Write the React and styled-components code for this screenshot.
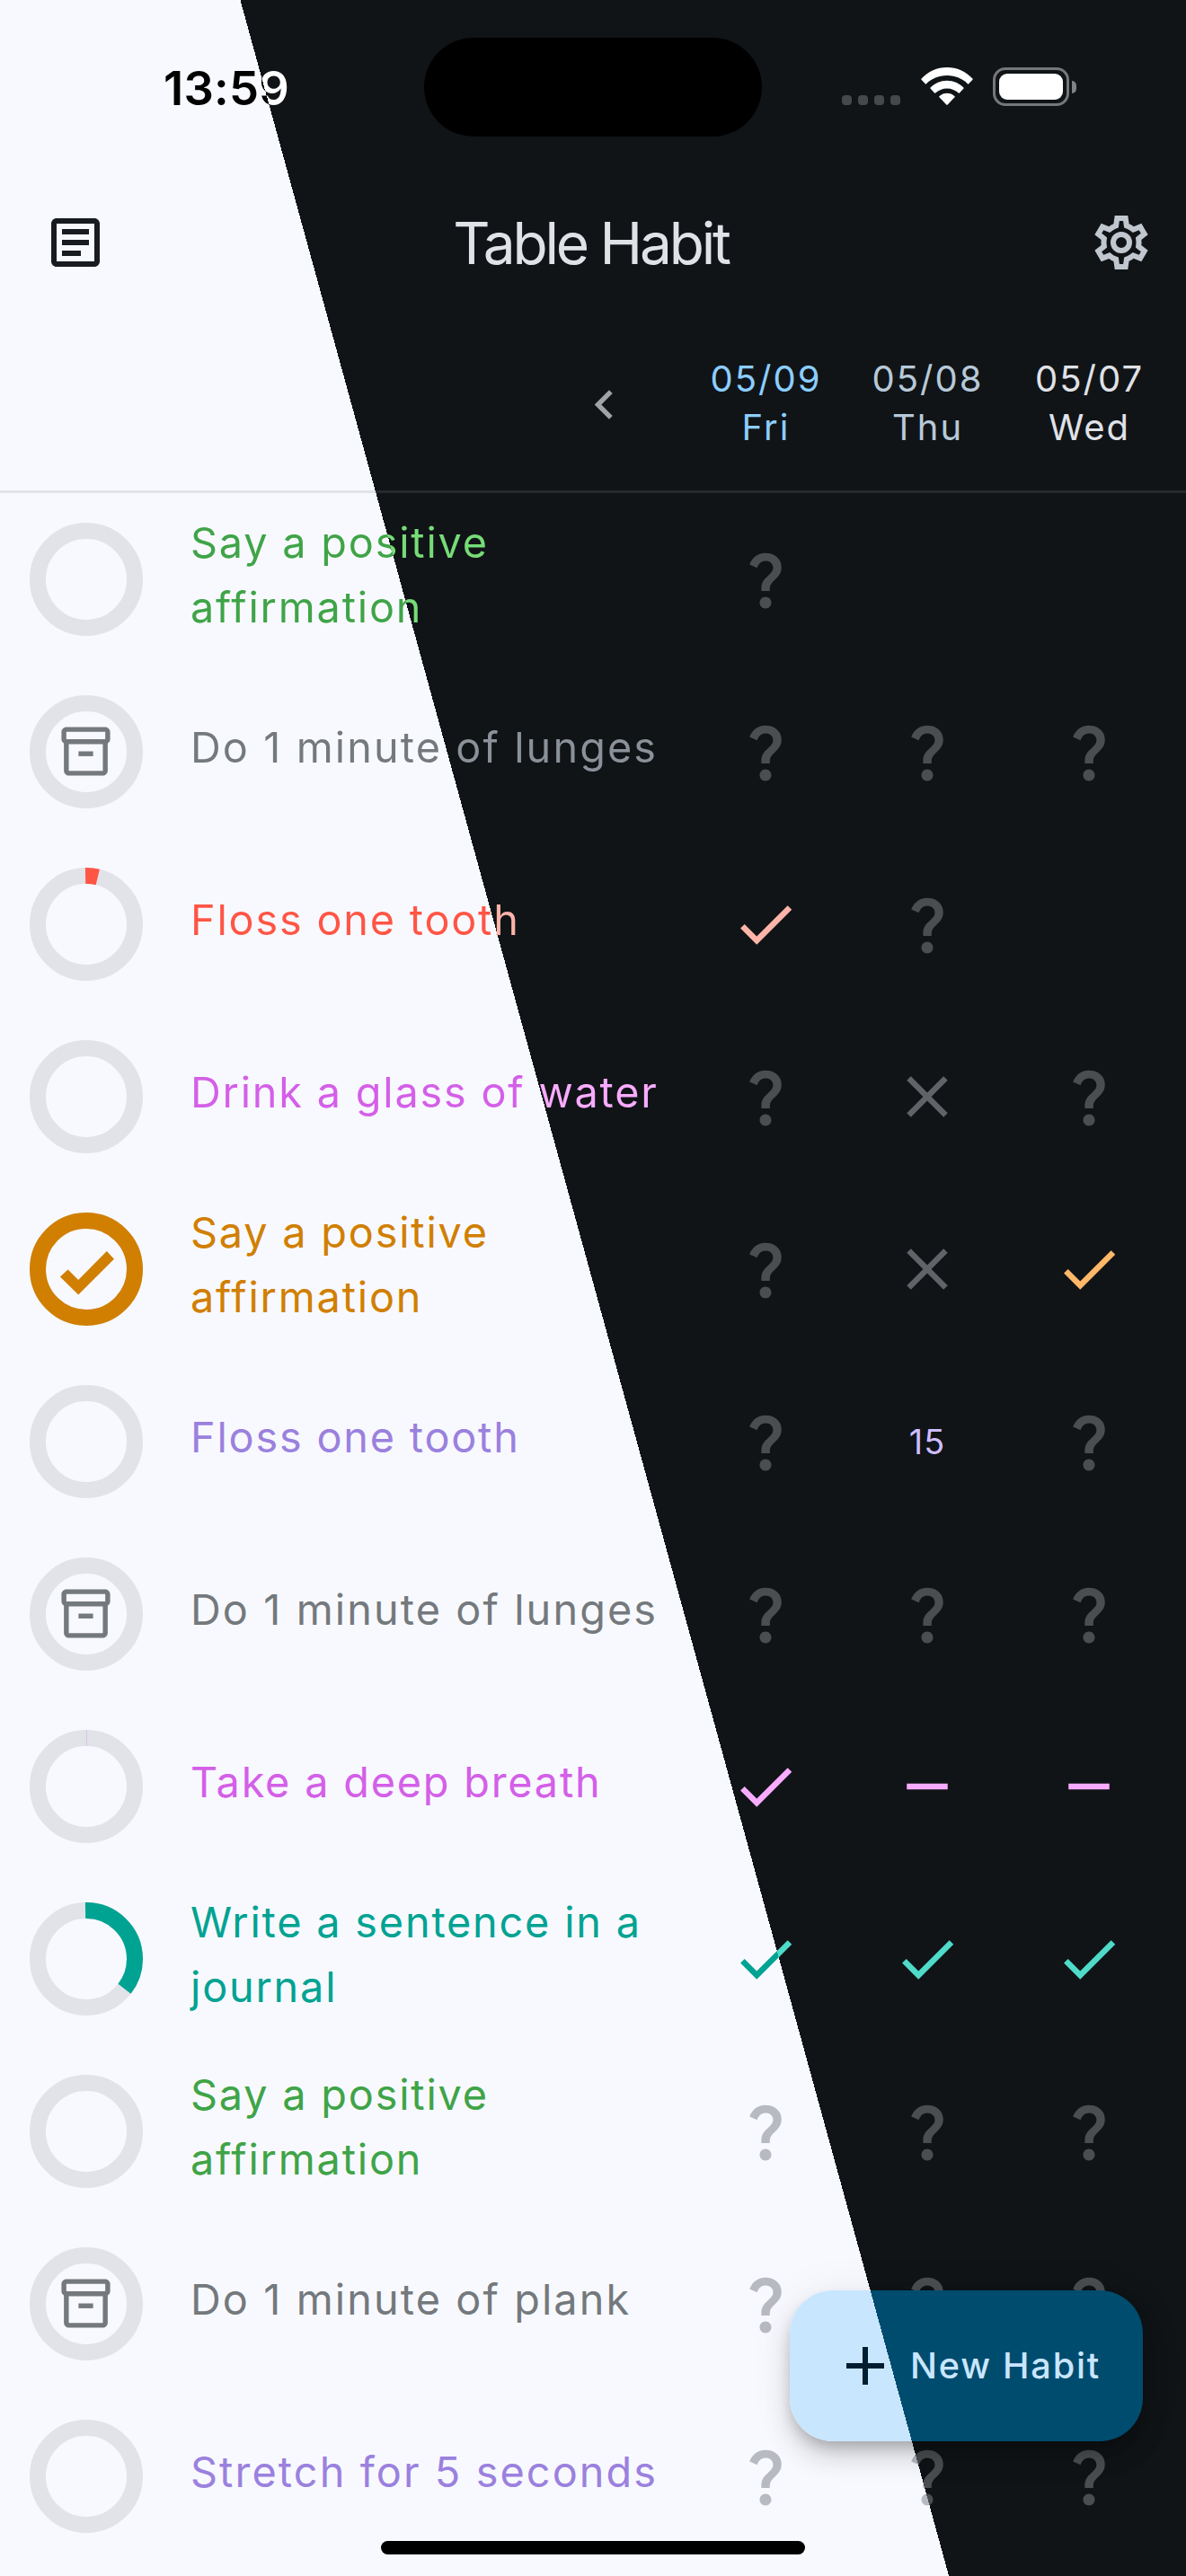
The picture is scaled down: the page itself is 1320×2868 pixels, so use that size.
import React, { useId } from "react";
import styled, { createGlobalStyle } from "styled-components";
import {
  MdOutlineArticle,
  MdOutlineInventory2,
  MdChevronLeft,
  MdAdd,
} from "react-icons/md";

/* The screen is divided by a slanted line: light theme left, dark theme right. */
const EDGE_TOP = 267.4;
const EDGE_SLOPE = 0.275;
const split = (light, dark) =>
  `linear-gradient(74.624deg, ${light} 1018.3px, ${dark} 1018.3px) fixed`;

const COLORS = {
  green: ["#3fa447", "#77dc77"],
  grey: ["#74797d", "#8b9199"],
  red: ["#ff5545", "#ffb4a9"],
  pink: ["#d45fe8", "#f9abff"],
  orange: ["#d17f00", "#ffb868"],
  purple: ["#9b81de", "#cebdff"],
  teal: ["#00a392", "#4fdbc9"],
  unknown: ["#b8bac1", "#4a4e51"],
  miss: ["#9a9da3", "#606468"],
};

const GlobalStyle = createGlobalStyle`
  body { margin: 0; background: #101417; }
  * { box-sizing: border-box; }
`;

const Screen = styled.div`
  position: relative;
  width: 1320px;
  height: 2868px;
  overflow: hidden;
  display: flex;
  flex-direction: column;
  font-family: Inter, "Liberation Sans", sans-serif;
  background: ${split("#f8f9ff", "#101417")};
`;

const StatusBar = styled.header`
  flex: none;
  height: 186px;
  display: grid;
  grid-template-columns: 472px 376px 1fr;
  align-items: start;
`;
const Time = styled.div`
  justify-self: center;
  margin: 66px 0 0 32px;
  font-size: 52.5px;
  line-height: 64px;
  font-weight: 600;
  letter-spacing: 0.2px;
  color: transparent;
  background: ${split("#000", "#fff")};
  -webkit-background-clip: text;
  background-clip: text;
`;
const Island = styled.div`
  height: 110px;
  margin-top: 42px;
  border-radius: 55px;
  background: #000;
`;
const Indicators = styled.div`
  display: flex;
  align-items: flex-end;
  height: 43px;
  margin: 75px 0 0 89px;
`;
const Dots = styled.div`
  display: flex;
  gap: 7px;
  padding-bottom: 1px;
  margin-right: 23px;
`;
const Dot = styled.span`
  width: 11px;
  height: 11px;
  border-radius: 4px;
  background: #46494b;
`;
const Wifi = styled.svg`
  width: 58px;
  height: 42px;
  margin: 0 22px 1px 0;
  fill: #fff;
`;
const Battery = styled.div`
  display: flex;
  align-items: center;
  gap: 3px;
`;
const BatteryCase = styled.div`
  width: 85px;
  height: 43px;
  padding: 4px;
  border: 3px solid #757779;
  border-radius: 14px;
`;
const BatteryFill = styled.div`
  height: 100%;
  border-radius: 9px;
  background: #fff;
`;
const BatteryTip = styled.div`
  width: 5px;
  height: 14px;
  border-radius: 0 5px 5px 0;
  background: #7f8183;
`;

const AppBar = styled.div`
  flex: none;
  height: 168px;
  padding: 0 36px 0 48px;
  display: grid;
  grid-template-columns: 72px 1fr 72px;
  align-items: center;
`;
const Title = styled.h1`
  margin: 0;
  padding: 2px 17px 0 0;
  text-align: center;
  font-size: 64px;
  line-height: 80px;
  font-weight: 400;
  letter-spacing: -3.2px;
  color: #e0e2e8;
`;
const SettingsIcon = styled.svg`
  width: 72px;
  height: 72px;
  fill: #c1c7cf;
`;

const DateBar = styled.div`
  flex: none;
  height: 192px;
  padding-right: 18px;
  display: grid;
  grid-template-columns: repeat(4, 180px);
  justify-content: end;
  align-items: center;
  justify-items: center;
`;
const Divider = styled.div`
  flex: none;
  height: 3px;
  background: ${split("#e1e3e8", "#25292c")};
`;
const DateCell = styled.div`
  display: flex;
  flex-direction: column;
  align-items: center;
  color: ${(p) => p.$color};
  font-size: 40px;
  line-height: 54px;
  letter-spacing: 2px;
  padding: 0 0 2px 1px;
`;

const Row = styled.div`
  flex: none;
  height: 192px;
  padding-right: 18px;
  display: grid;
  grid-template-columns: 192px 570px repeat(3, 180px);
  align-items: center;
`;
const RingBox = styled.div`
  display: grid;
  place-items: center;
  & > * {
    grid-area: 1 / 1;
  }
`;
const RingSvg = styled.svg`
  width: 126px;
  height: 126px;
  fill: none;
`;
const ArchiveIcon = styled(MdOutlineInventory2)`
  width: 65px;
  height: 65px;
  margin: 0 1px 1px 0;
  color: #74797d;
`;
const Name = styled.div`
  padding: 0 0 10px 20px;
  font-size: 46.8px;
  line-height: 72px;
  letter-spacing: ${(p) => p.$tracking || 1.8}px;
  color: ${(p) => (p.$split ? "transparent" : p.$tone[0])};
  ${(p) =>
    p.$split
      ? `background: ${split(p.$tone[0], p.$tone[1])};
         -webkit-background-clip: text;
         background-clip: text;`
      : ""}
`;
const Cell = styled.div`
  display: grid;
  place-items: center;
`;
const Count = styled.span`
  font-size: 37.8px;
  line-height: 48px;
  letter-spacing: 1px;
  color: ${(p) => p.$color};
`;
const MarkSvg = styled.svg`
  width: 78px;
  height: 78px;
  margin-bottom: 1px;
  display: block;
`;

const Fab = styled.button`
  position: absolute;
  left: 879px;
  top: 2550px;
  width: 393px;
  height: 168px;
  padding: 0 48px;
  border: 0;
  border-radius: 48px;
  display: flex;
  align-items: center;
  gap: 14px;
  font: 450 39.6px / 54px Inter, "Liberation Sans", sans-serif;
  letter-spacing: 1.8px;
  color: #c9e6ff;
  white-space: nowrap;
  background: ${split("#c9e6ff", "#004c6f")};
  box-shadow: 0 9px 15px -3px rgba(0, 0, 0, 0.2),
    0 18px 30px rgba(0, 0, 0, 0.14), 0 3px 54px rgba(0, 0, 0, 0.06);
  & svg {
    flex: none;
    color: #001e2f;
  }
`;
const HomeIndicator = styled.div`
  position: absolute;
  left: 424px;
  bottom: 24px;
  width: 472px;
  height: 15px;
  border-radius: 8px;
  background: #000;
`;

const MARKS = {
  "?": {
    tone: "unknown",
    d: "M11.07 12.85c.77-1.39 2.25-2.21 3.11-3.44.91-1.29.4-3.7-2.18-3.7-1.69 0-2.52 1.28-2.87 2.34L6.54 6.96C7.25 4.83 9.18 3 11.99 3c2.35 0 3.96 1.07 4.78 2.41.7 1.15 1.11 3.3.03 4.9-1.2 1.77-2.35 2.31-2.97 3.45-.25.46-.35.76-.35 2.24h-2.89c-.01-.78-.13-2.05.48-3.15zM14 20c0 1.1-.9 2-2 2s-2-.9-2-2 .9-2 2-2 2 .9 2 2z",
  },
  x: {
    tone: "miss",
    d: "M19 6.41L17.59 5 12 10.59 6.41 5 5 6.41 10.59 12 5 17.59 6.41 19 12 13.41 17.59 19 19 17.59 13.41 12z",
  },
  v: { d: "M9 16.17L4.83 12l-1.42 1.41L9 19 21 7l-1.41-1.41z" },
  "-": { d: "M19 13H5v-2h14z" },
};

/* A day's mark, filled by a hard-stop gradient that follows the theme edge. */
function Mark({ kind, tone, cx, cy }) {
  const id = useId();
  const mark = MARKS[kind];
  const [light, dark] = COLORS[mark.tone || tone];
  const unit = 24 / 78;
  const px = 12 + (EDGE_TOP + EDGE_SLOPE * cy - cx) * unit;
  return (
    <MarkSvg viewBox="0 0 24 24">
      <linearGradient
        id={id}
        gradientUnits="userSpaceOnUse"
        x1={px - 1}
        y1={12 + EDGE_SLOPE}
        x2={px + 1}
        y2={12 - EDGE_SLOPE}
      >
        <stop offset="0.5" stopColor={light} />
        <stop offset="0.5" stopColor={dark} />
      </linearGradient>
      <path d={mark.d} fill={`url(#${id})`} />
    </MarkSvg>
  );
}

function Ring({ progress = 0, color, archived, done }) {
  const len = 2 * Math.PI * 54;
  return (
    <RingBox>
      <RingSvg viewBox="-63 -63 126 126">
        <circle r="54" stroke="#e1e3e8" strokeWidth="18" />
        {progress > 0 && (
          <circle
            r="54"
            stroke={color}
            strokeWidth="18"
            strokeDasharray={progress >= 1 ? undefined : `${len * progress} ${len}`}
            transform="rotate(-91)"
          />
        )}
        {progress < 0 && (
          <rect x="0" y="-63" width="1" height="18" fill={color} opacity="0.25" />
        )}
        {done && (
          <path
            fill={color}
            d="M-20.4 .6L-29.1 8.4L-8.8 28.4L31 -11.2L22.8 -20.1L-8.8 12z"
          />
        )}
      </RingSvg>
      {archived && <ArchiveIcon />}
    </RingBox>
  );
}

const HABITS = [
  { name: "Say a positive affirmation", tone: "green", split: true, days: ["?", "", ""] },
  { name: "Do 1 minute of lunges", tone: "grey", tracking: 2.1, split: true, archived: true, days: ["?", "?", "?"] },
  { name: "Floss one tooth", tone: "red", split: true, progress: 0.041, days: ["v", "?", ""] },
  { name: "Drink a glass of water", tone: "pink", split: true, days: ["?", "x", "?"] },
  { name: "Say a positive affirmation", tone: "orange", progress: 1, done: true, days: ["?", "x", "v"] },
  { name: "Floss one tooth", tone: "purple", days: ["?", "15", "?"] },
  { name: "Do 1 minute of lunges", tone: "grey", tracking: 2.1, archived: true, days: ["?", "?", "?"] },
  { name: "Take a deep breath", tone: "pink", progress: -1, days: ["v", "-", "-"] },
  { name: "Write a sentence in a journal", tone: "teal", progress: 0.358, days: ["v", "v", "v"] },
  { name: "Say a positive affirmation", tone: "green", days: ["?", "?", "?"] },
  { name: "Do 1 minute of plank", tone: "grey", tracking: 2.1, archived: true, days: ["?", "?", "?"] },
  { name: "Stretch for 5 seconds", tone: "purple", tracking: 2.1, days: ["?", "?", "?"] },
];

const DATES = [
  ["05/09", "Fri", "#8cceff"],
  ["05/08", "Thu", "#b7c9d9"],
  ["05/07", "Wed", "#e0e2e8"],
];

export default function App() {
  return (
    <Screen>
      <GlobalStyle />
      <StatusBar>
        <Time>13:59</Time>
        <Island />
        <Indicators>
          <Dots>
            <Dot />
            <Dot />
            <Dot />
            <Dot />
          </Dots>
          <Wifi viewBox="0 0 58 42">
            <path d="M29 9C38.3 9 46.4 12.6 52.2 18.4Q52.7 18.9 53.2 18.3L57.5 13.7Q58 13 57.4 12.5C50 4.6 40 0 29 0S8 4.6.6 12.5Q0 13 .5 13.7L4.8 18.3Q5.3 18.9 5.8 18.4C11.6 12.6 19.7 9 29 9z" />
            <path d="M29 23.4C34 23.4 38.5 25.4 41.8 28.6Q42.4 29.1 42.9 28.5L47.5 23.6Q48 23 47.4 22.4C42.6 17.7 36.1 14.8 29 14.8S15.4 17.7 10.6 22.4Q10 23 10.5 23.6L15.1 28.5Q15.6 29.1 16.2 28.6C19.5 25.4 24 23.4 29 23.4z" />
            <path d="M29 28.8C32.2 28.8 35.2 30 37.4 32.1Q38 32.7 37.5 33.3L29.7 41.6Q29 42.2 28.3 41.6L20.5 33.3Q20 32.7 20.6 32.1C22.8 30 25.8 28.8 29 28.8z" />
          </Wifi>
          <Battery>
            <BatteryCase>
              <BatteryFill />
            </BatteryCase>
            <BatteryTip />
          </Battery>
        </Indicators>
      </StatusBar>

      <AppBar>
        <MdOutlineArticle size={72} color="#181c20" />
        <Title>Table Habit</Title>
        <SettingsIcon viewBox="0 0 24 24" fillRule="evenodd">
          <path d="M19.43 13c.04-.33.08-.67.08-1 0-.34-.03-.66-.07-.98l2.45-1.91-2.43-4.22-2.87 1.16c-.52-.4-1.09-.74-1.7-.99L14.44 2H9.57l-.44 3.07c-.61.26-1.18.6-1.7 1L4.56 4.9 2.12 9.12l2.44 1.9c-.04.33-.07.65-.07.98 0 .34.03.68.07 1l-2.43 1.92 2.43 4.2 2.87-1.15c.53.41 1.1.75 1.71 1L9.58 22h4.85l.44-3.06c.61-.26 1.18-.6 1.7-1.01l2.88 1.19 2.43-4.2zM17.45 11.270c.04.31.05.52.05.73 0 .21-.02.43-.05.73l-.14 1.13.89.7 1.08.84-.7 1.21-1.27-.51-1.04-.42-.9.68c-.43.32-.84.56-1.25.73l-1.06.43-.16 1.13-.2 1.35h-1.4l-.19-1.35-.16-1.13-1.06-.43c-.43-.18-.83-.41-1.23-.71l-.91-.7-1.06.43-1.27.51-.7-1.21 1.08-.84.89-.7-.14-1.13c-.03-.31-.05-.54-.05-.74s.02-.43.05-.73l.14-1.13-.89-.7-1.08-.84.7-1.21 1.27.51 1.04.42.9-.68c.43-.32.84-.56 1.25-.73l1.06-.43.16-1.13.2-1.35h1.39l.19 1.35.16 1.13 1.06.43c.43.18.83.41 1.23.71l.91.7 1.06-.43 1.27-.51.7 1.21-1.07.85-.89.7z" />
          <path d="M12 8a4 4 0 1 0 0 8 4 4 0 0 0 0-8zm0 2a2 2 0 1 1 0 4 2 2 0 0 1 0-4z" />
        </SettingsIcon>
      </AppBar>

      <DateBar>
        <MdChevronLeft size={65} color="#a0a2a4" />
        {DATES.map(([date, day, color]) => (
          <DateCell key={date} $color={color}>
            <span>{date}</span>
            <span>{day}</span>
          </DateCell>
        ))}
      </DateBar>
      <Divider />

      {HABITS.map((habit, row) => (
        <Row key={row}>
          <Ring
            progress={habit.progress}
            color={COLORS[habit.tone][0]}
            archived={habit.archived}
            done={habit.done}
          />
          <Name
            $tone={COLORS[habit.tone]}
            $split={habit.split}
            $tracking={habit.tracking}
          >
            {habit.name}
          </Name>
          {habit.days.map((day, col) => (
            <Cell key={col}>
              {MARKS[day] ? (
                <Mark
                  kind={day}
                  tone={habit.tone}
                  cx={852 + col * 180}
                  cy={645 + row * 192}
                />
              ) : (
                day && <Count $color={COLORS[habit.tone][1]}>{day}</Count>
              )}
            </Cell>
          ))}
        </Row>
      ))}

      <Fab>
        <MdAdd size={72} />
        New Habit
      </Fab>
      <HomeIndicator />
    </Screen>
  );
}
